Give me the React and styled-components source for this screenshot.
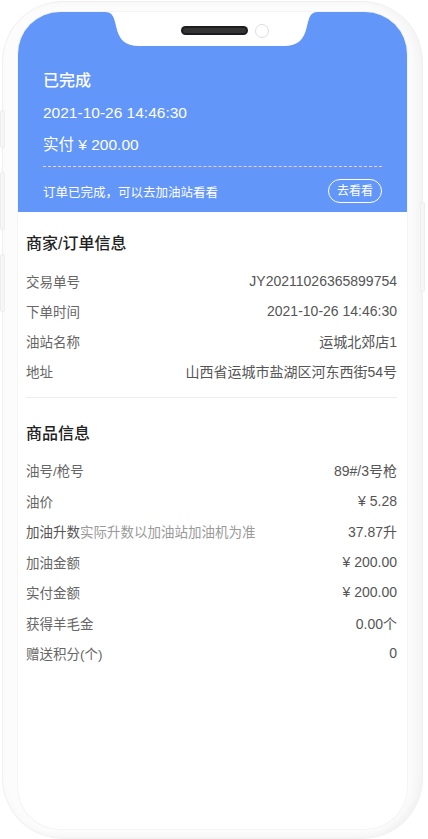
import React from 'react'
import styled, { createGlobalStyle } from 'styled-components'

const GlobalStyle = createGlobalStyle`
    html, body {
        margin: 0;
        padding: 0;
        background: #ffffff;
    }
    body {
        font-family: "Liberation Sans", "Noto Sans CJK SC", sans-serif;
        -webkit-font-smoothing: antialiased;
    }
`

const Stage = styled.div`
    width: 428px;
    height: 839px;
    padding: 2px 0 0 3px;
    box-sizing: border-box;
    position: relative;
`

const Phone = styled.div`
    position: relative;
    width: 419px;
    height: 836px;
    box-sizing: border-box;
    padding: 10px 15px 9px 15px;
    border-radius: 60px;
    background: #fcfcfc;
    box-shadow:
        0 0 0 1px #f0f0f0,
        inset -7px 0 9px rgba(0, 0, 0, 0.03),
        inset 0 -4px 6px rgba(0, 0, 0, 0.015);
`

const SideKey = styled.div`
    position: absolute;
    ${p => (p.$right ? 'right: -3px;' : 'left: -3px;')}
    top: ${p => p.$top}px;
    width: 3px;
    height: ${p => p.$h}px;
    background: #f6f6f6;
    border: 1px solid #eeeeee;
    border-radius: 2px;
`

const Screen = styled.div`
    position: relative;
    height: 100%;
    border-radius: 42px;
    overflow: hidden;
    background: #ffffff;
    box-shadow: 0 0 0 1px #f4f4f4;
`

const Notch = styled.svg`
    position: absolute;
    top: 0;
    left: 87px;
    display: block;
`

const Header = styled.div`
    background: #6296f9;
    color: #ffffff;
    padding: 58px 25px 9px 25px;
`

const Status = styled.div`
    font-size: 16px;
    line-height: 22px;
    font-weight: 500;
`

const HeaderLine = styled.div`
    margin-top: ${p => p.$gap}px;
    font-size: 15.5px;
    line-height: 20px;
`

const Dash = styled.div`
    margin-top: 11px;
    border-top: 1px dashed #f6cdd6;
`

const NoticeRow = styled.div`
    margin-top: 12px;
    height: 24px;
    display: flex;
    align-items: center;
    justify-content: space-between;
    font-size: 12.5px;
`

const GoButton = styled.button`
    box-sizing: border-box;
    width: 54px;
    height: 24px;
    padding: 0;
    border: 1.5px solid #ffffff;
    border-radius: 12px;
    background: transparent;
    color: #ffffff;
    font-family: inherit;
    font-size: 12px;
    line-height: 20px;
`

const Body = styled.div`
    padding: 21px 10px 0 8px;
`

const Section = styled.div`
    padding-bottom: ${p => (p.$divided ? '11px' : '0')};
    border-bottom: ${p => (p.$divided ? '1px solid #ececec' : 'none')};
    margin-bottom: ${p => (p.$divided ? '25px' : '0')};
`

const SectionTitle = styled.div`
    font-size: 16px;
    line-height: 22px;
    font-weight: 500;
    color: #222222;
    margin-bottom: ${p => p.$gap}px;
`

const Row = styled.div`
    display: flex;
    justify-content: space-between;
    align-items: center;
    height: ${p => p.$h}px;
    font-size: 13.5px;
`

const Label = styled.span`
    color: #666666;
`

const Strong = styled.span`
    color: #555555;
`

const Hint = styled.span`
    color: #9a9a9a;
`

const Value = styled.span`
    color: #555555;
    font-size: 14px;
`

const orderRows = [
    ['交易单号', 'JY20211026365899754'],
    ['下单时间', '2021-10-26 14:46:30'],
    ['油站名称', '运城北郊店1'],
    ['地址', '山西省运城市盐湖区河东西街54号'],
]

const goodsRows = [
    ['油号/枪号', '89#/3号枪'],
    ['油价', '¥ 5.28'],
    ['加油升数', '37.87升', '实际升数以加油站加油机为准'],
    ['加油金额', '¥ 200.00'],
    ['实付金额', '¥ 200.00'],
    ['获得羊毛金', '0.00个'],
    ['赠送积分(个)', '0'],
]

function App() {
    return (
        <Stage>
            <GlobalStyle />
            <Phone>
                <SideKey $top={108} $h={36} />
                <SideKey $top={170} $h={56} />
                <SideKey $top={252} $h={56} />
                <SideKey $right $top={200} $h={88} />
                <Screen>
                    <Notch width="213" height="35" viewBox="0 0 213 35">
                        <path
                            d="M0 0 H213 C205 0 204 6 202 14 C199 28 193 34 179 34 H34 C20 34 14 28 11 14 C9 6 8 0 0 0 Z"
                            fill="#ffffff"
                        />
                        <rect x="76" y="14" width="67" height="9" rx="4.5" fill="#1c1c1c" />
                        <rect x="78" y="16" width="63" height="5" rx="2.5" fill="#333333" />
                        <circle cx="157" cy="19" r="6.5" fill="#ffffff" stroke="#dddddd" strokeWidth="1" />
                    </Notch>
                    <Header>
                        <Status>已完成</Status>
                        <HeaderLine $gap={11}>2021-10-26 14:46:30</HeaderLine>
                        <HeaderLine $gap={12}>实付 ¥ 200.00</HeaderLine>
                        <Dash />
                        <NoticeRow>
                            <span>订单已完成，可以去加油站看看</span>
                            <GoButton>去看看</GoButton>
                        </NoticeRow>
                    </Header>
                    <Body>
                        <Section $divided>
                            <SectionTitle $gap={11}>商家/订单信息</SectionTitle>
                            {orderRows.map(([k, v]) => (
                                <Row key={k} $h={30}>
                                    <Label>{k}</Label>
                                    <Value>{v}</Value>
                                </Row>
                            ))}
                        </Section>
                        <Section>
                            <SectionTitle $gap={10}>商品信息</SectionTitle>
                            {goodsRows.map(([k, v, hint]) => (
                                <Row key={k} $h={30.5}>
                                    <Label>
                                        {hint ? <Strong>{k}</Strong> : k}
                                        {hint && <Hint>{hint}</Hint>}
                                    </Label>
                                    <Value>{v}</Value>
                                </Row>
                            ))}
                        </Section>
                    </Body>
                </Screen>
            </Phone>
        </Stage>
    )
}

export default App
